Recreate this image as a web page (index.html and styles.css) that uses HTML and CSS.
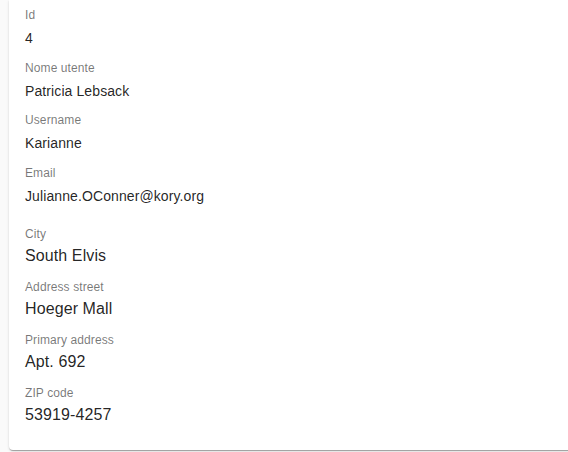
FILE: index.html
```html
<!DOCTYPE html>
<html lang="it">
<head>
<meta charset="utf-8">
<title>Utente 4</title>
<link rel="stylesheet" href="styles.css">
</head>
<body>
<main class="page">
  <section class="card">
    <div class="group group-user">
      <div class="field"><span class="label">Id</span><span class="value">4</span></div>
      <div class="field"><span class="label">Nome utente</span><span class="value">Patricia Lebsack</span></div>
      <div class="field"><span class="label">Username</span><span class="value">Karianne</span></div>
      <div class="field"><span class="label">Email</span><span class="value">Julianne.OConner@kory.org</span></div>
    </div>
    <div class="group group-address">
      <div class="field"><span class="label">City</span><span class="value">South Elvis</span></div>
      <div class="field"><span class="label">Address street</span><span class="value">Hoeger Mall</span></div>
      <div class="field"><span class="label">Primary address</span><span class="value">Apt. 692</span></div>
      <div class="field"><span class="label">ZIP code</span><span class="value">53919-4257</span></div>
    </div>
  </section>
</main>
</body>
</html>
```

FILE: styles.css
```css
html, body {
  margin: 0;
  padding: 0;
  background: #fafafa;
  overflow: hidden;
  font-family: "Liberation Sans", Arial, Helvetica, sans-serif;
}

.page {
  padding: 0 0 0 9px;
  height: 452px;
}

.card {
  background: #fff;
  margin-right: -24px;
  border-radius: 0 0 4px 4px;
  box-shadow: 0 2px 1px -1px rgba(0,0,0,0.2), 0 1px 1px 0 rgba(0,0,0,0.14), 0 1px 3px 0 rgba(0,0,0,0.12);
  padding: 8px 16px 24px 16px;
  display: flex;
  flex-direction: column;
  gap: 21px;
}

.group {
  display: flex;
  flex-direction: column;
}

.group-user { gap: 12.5px; }
.group-address { gap: 13px; }

.field {
  display: flex;
  flex-direction: column;
}

.label {
  font-size: 12px;
  line-height: 14px;
  letter-spacing: 0.1px;
  color: rgba(0,0,0,0.54);
}

.group-user .value {
  margin-top: 6px;
  font-size: 14px;
  line-height: 20px;
  letter-spacing: 0.1px;
  color: rgba(0,0,0,0.87);
}

.group-address .value {
  margin-top: 3px;
  font-size: 16px;
  line-height: 23px;
  letter-spacing: 0.1px;
  color: rgba(0,0,0,0.87);
}
```
